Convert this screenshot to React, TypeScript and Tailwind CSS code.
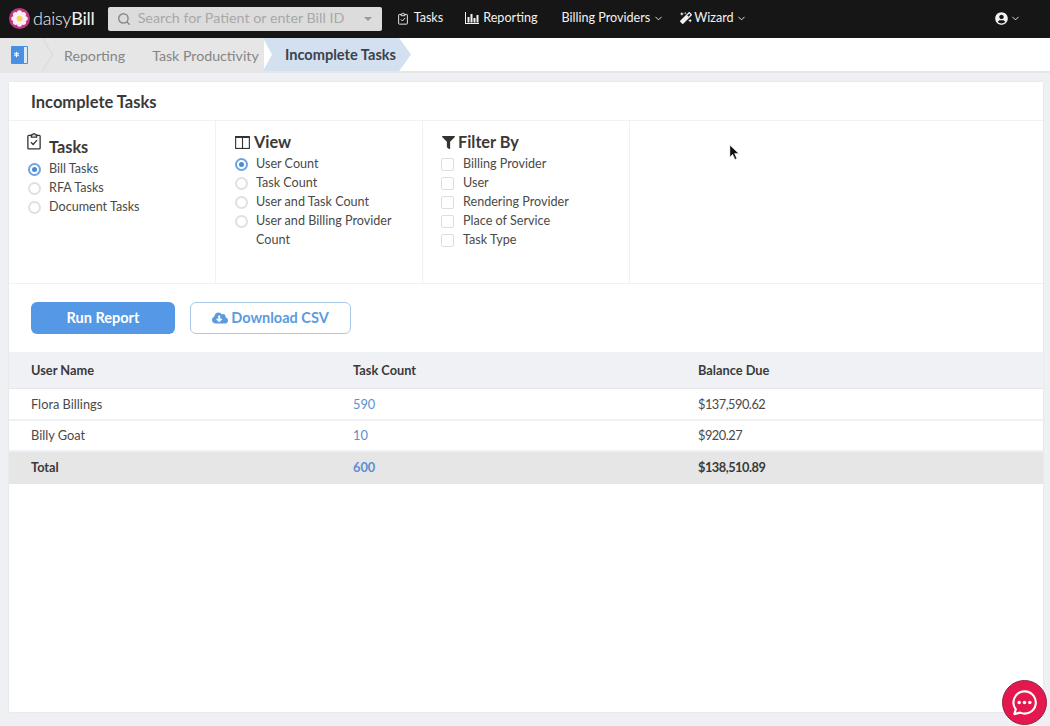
import React from "react"
import { Asterisk, ChevronDown, Search } from "lucide-react"
import { FaCloudDownloadAlt, FaFilter, FaMagic, FaUserCircle } from "react-icons/fa"

const ClipboardCheck = ({ className }: { className?: string }) => (
  <svg viewBox="0 0 16 20" fill="none" stroke="currentColor" strokeWidth="1.5" className={className}>
    <path d="M5 3.5H2a1 1 0 0 0-1 1V18a1 1 0 0 0 1 1h12a1 1 0 0 0 1-1V4.500a1 1 0 0 0-1-1h-3" />
    <path d="M5 5.500V3h1.500a1.500 1.500 0 0 1 3 0H11v2.500z" />
    <path d="M4.500 11.500l2.500 2.500 4.500-5" />
  </svg>
)

const Logo = () => (
  <svg viewBox="0 0 22 22" className="w-[21px] h-[21px]">
    <circle cx="11" cy="11" r="11" fill="#c2377f" />
    {[0, 45, 90, 135, 180, 225, 270, 315].map((a) => (
      <ellipse key={a} cx="11" cy="5.800" rx="2.700" ry="3.400" fill="#fbeef4" transform={`rotate(${a} 11 11)`} />
    ))}
    <circle cx="11" cy="11" r="3" fill="#f6d65a" />
  </svg>
)

const Radio = ({ on }: { on?: boolean }) => (
  <span className={on
    ? "w-[13px] h-[13px] rounded-full border-2 border-[#6aa3e6] flex items-center justify-center shrink-0"
    : "w-[13px] h-[13px] rounded-full border-2 border-[#e0e0e0] shrink-0"}>
    {on && <span className="w-[5px] h-[5px] rounded-full bg-[#4a8ad4]" />}
  </span>
)

const Option = ({ label, on }: { label: string; on?: boolean }) => (
  <div className="flex items-center h-[19px] text-[12.600px] text-[#4a4a4a]">
    <Radio on={on} />
    <span className="ml-[8px]">{label}</span>
  </div>
)

const Check = ({ label }: { label: string }) => (
  <div className="flex items-center h-[19px] text-[12.600px] text-[#4a4a4a]">
    <span className="w-[13px] h-[13px] rounded-[2px] border border-[#dedede] bg-white shrink-0" />
    <span className="ml-[9px]">{label}</span>
  </div>
)

const Crumb = ({ children }: { children: React.ReactNode }) => (
  <span className="text-[14.200px] text-[#858585]">{children}</span>
)

const NavItem = ({ children }: { children: React.ReactNode }) => (
  <div className="flex items-center text-[12.600px] text-[#f2f2f2]">{children}</div>
)

const Row = ({ name, count, due, total }: { name: string; count: string; due: string; total?: boolean }) => (
  <div className={total
    ? "grid grid-cols-[322px_345px_1fr] pl-[22px] h-[31.500px] items-center text-[12.800px] font-bold text-[#3a3a3a] bg-[#e6e6e6]"
    : "grid grid-cols-[322px_345px_1fr] pl-[22px] pt-[1.500px] h-[31.500px] items-center text-[12.800px] text-[#4a4a4a] border-b-2 border-[#eff1f5]"}>
    <span>{name}</span>
    <span className="text-[#5b8fd0]">{count}</span>
    <span className="tracking-[-0.5px]">{due}</span>
  </div>
)

export default function App() {
  return (
    <div className="w-[1050px] h-[726px] overflow-hidden bg-[#eff0f3] flex flex-col relative font-['Lato','Liberation_Sans',sans-serif]">
      <header className="h-[38px] bg-[#161616] flex items-center shrink-0 pb-[1px]">
        <div className="ml-[9px] flex items-center">
          <Logo />
          <span className="ml-[3px] text-[18px] text-[#f0f0f0] tracking-[-0.2px] font-light">daisy<span className="font-normal">Bill</span></span>
        </div>
        <div className="ml-[13px] w-[274px] h-[24px] bg-[#dcdcdc] rounded-[2px] flex items-center pl-[9px] pr-[10px]">
          <Search size={14} strokeWidth={2.5} className="text-[#8a8a8a]" />
          <span className="ml-[7px] -mt-[1px] text-[14.300px] text-[#a8a8a8]">Search for Patient or enter Bill ID</span>
          <span className="ml-auto w-0 h-0 border-x-[4px] border-x-transparent border-t-[4px] border-t-[#999]" />
        </div>
        <div className="ml-[16px] flex items-center">
          <NavItem>
            <ClipboardCheck className="w-[10px] h-[13px]" />
            <span className="ml-[6px]">Tasks</span>
          </NavItem>
          <div className="ml-[22px]">
            <NavItem>
              <svg viewBox="0 0 14 12" className="w-[14px] h-[12px]" fill="currentColor">
                <path d="M0 0h1v11h13v1H0zM2.500 5h2v5.500h-2zM5.500 2h2v8.500h-2zM8.500 6h2v4.500h-2zM11.500 3h2v7.500h-2z" />
              </svg>
              <span className="ml-[4px]">Reporting</span>
            </NavItem>
          </div>
          <div className="ml-[24px]">
            <NavItem>
              <span>Billing Providers</span>
              <ChevronDown size={11} className="ml-[3px]" />
            </NavItem>
          </div>
          <div className="ml-[16px]">
            <NavItem>
              <FaMagic size={12} />
              <span className="ml-[2px]">Wizard</span>
              <ChevronDown size={11} className="ml-[2px]" />
            </NavItem>
          </div>
        </div>
        <div className="ml-auto mr-[29px] flex items-center text-[#f2f2f2]">
          <FaUserCircle size={13} />
          <ChevronDown size={11} className="ml-[2px]" />
        </div>
      </header>

      <nav className="h-[35px] bg-white shrink-0 flex border-b-2 border-[#e6e6e6]">
        <div className="w-[264px] bg-[#e6e6e6] flex items-center relative">
          <span className="ml-[11px] w-[17px] h-[18px] bg-[#4a90e2] rounded-[1px] flex items-center justify-between text-white pl-[1px] pr-[1px]">
            <Asterisk size={9} strokeWidth={3} />
            <span className="w-[3px] h-[16px] bg-[#dbe9f8]" />
          </span>
          <svg viewBox="0 0 12 36" className="w-[12px] h-[33px] ml-[14px]" fill="none" stroke="#d6d6d6">
            <path d="M0 0l11 18L0 36" />
          </svg>
          <span className="ml-[10px]"><Crumb>Reporting</Crumb></span>
          <span className="ml-[27px]"><Crumb>Task Productivity</Crumb></span>
        </div>
        <div className="w-[148px] bg-[#d2e0ef] flex items-center pl-[22px] pt-[1px] [clip-path:polygon(0_0,92%_0,100%_50%,92%_100%,0_100%,9px_50%)] -ml-[1px]">
          <span className="text-[14.600px] font-bold text-[#3a4350]">Incomplete Tasks</span>
        </div>
      </nav>

      <main className="ml-[9px] mr-[7px] mt-[9px] h-[630px] bg-white shadow-[0_0_2px_rgba(0,0,0,0.08)]">
        <div className="h-[39px] pl-[22px] pt-[2px] flex items-center border-b border-[#eff1f5] text-[16.500px] font-bold text-[#3a3a3a]">
          Incomplete Tasks
        </div>

        <div className="grid grid-cols-[207px_207px_207px_1fr] h-[163px] border-b border-[#eff1f5]">
          <section className="border-r border-[#eff1f5] pl-[18px] pt-[11px]">
            <div className="flex items-start">
              <ClipboardCheck className="w-[14px] h-[18px] text-[#333]" />
              <span className="ml-[8px] mt-[5px] text-[16.300px] font-bold text-[#3a3a3a] leading-[20px]">Tasks</span>
            </div>
            <div className="mt-[3px] ml-[1px]">
              <Option label="Bill Tasks" on />
              <Option label="RFA Tasks" />
              <Option label="Document Tasks" />
            </div>
          </section>
          <section className="border-r border-[#eff1f5] pl-[19px] pt-[11px]">
            <div className="flex items-center h-[20px]">
              <svg viewBox="0 0 16 14" className="w-[15px] h-[13px]" fill="none" stroke="#333" strokeWidth="1.200">
                <rect x="0.600" y="0.600" width="14.800" height="12.800" />
                <path d="M8 0.600v12.800M0.600 1.500h14.800" />
              </svg>
              <span className="ml-[4px] text-[16.300px] font-bold text-[#3a3a3a]">View</span>
            </div>
            <div className="mt-[3px]">
              <Option label="User Count" on />
              <Option label="Task Count" />
              <Option label="User and Task Count" />
              <Option label="User and Billing Provider" />
              <div className="pl-[21px] h-[19px] flex items-center text-[12.600px] text-[#4a4a4a]">Count</div>
            </div>
          </section>
          <section className="border-r border-[#eff1f5] pl-[19px] pt-[11px]">
            <div className="flex items-center h-[20px]">
              <FaFilter size={13} className="text-[#333]" />
              <span className="ml-[3px] text-[16.300px] font-bold text-[#3a3a3a]">Filter By</span>
            </div>
            <div className="mt-[3px] -ml-[1px]">
              <Check label="Billing Provider" />
              <Check label="User" />
              <Check label="Rendering Provider" />
              <Check label="Place of Service" />
              <Check label="Task Type" />
            </div>
          </section>
          <section />
        </div>

        <div className="h-[68px] pl-[22px] flex items-center gap-[15px]">
          <button className="w-[144px] h-[32px] rounded-[6px] bg-[#5598e6] text-white text-[14.500px] font-bold">Run Report</button>
          <button className="w-[161px] h-[32px] rounded-[6px] bg-white border border-[#a9c8ea] text-[#5b9be0] text-[14.500px] font-bold flex items-center justify-center">
            <FaCloudDownloadAlt size={16} />
            <span className="ml-[3px]">Download CSV</span>
          </button>
        </div>

        <div className="grid grid-cols-[322px_345px_1fr] pl-[22px] pt-[1px] h-[37px] items-center bg-[#eff1f5] border-b border-[#e4e6ea] text-[12.800px] font-bold text-[#3a3a3a]">
          <span>User Name</span>
          <span>Task Count</span>
          <span>Balance Due</span>
        </div>
        <Row name="Flora Billings" count="590" due="$137,590.62" />
        <Row name="Billy Goat" count="10" due="$920.27" />
        <Row name="Total" count="600" due="$138,510.89" total />
      </main>

      {/* mouse pointer caught in the capture */}
      <svg viewBox="0 0 12 18" className="absolute left-[729px] top-[144px] w-[11px] h-[17px]" fill="#111" stroke="#fff" strokeWidth="0.500">
        <path d="M1 1v13l3-3 2.500 5.500 2-1L6 10h4.500z" />
      </svg>

      <div className="absolute left-[1002px] top-[680px] w-[45px] h-[45px] rounded-full bg-[#e5174f] border border-[#8a2a40] flex items-center justify-center">
        <svg viewBox="0 0 30 30" className="w-[29px] h-[29px]" fill="none">
          <path d="M15 3.500a11.500 11.500 0 1 1 -4.500 22l-6 1.500 1.500-5A11.500 11.500 0 0 1 15 3.500z" stroke="#fff" strokeWidth="2.200" strokeLinejoin="round" />
          <circle cx="9.500" cy="15" r="1.800" fill="#fff" />
          <circle cx="15" cy="15" r="1.800" fill="#fff" />
          <circle cx="20.500" cy="15" r="1.800" fill="#fff" />
        </svg>
      </div>
    </div>
  )
}
